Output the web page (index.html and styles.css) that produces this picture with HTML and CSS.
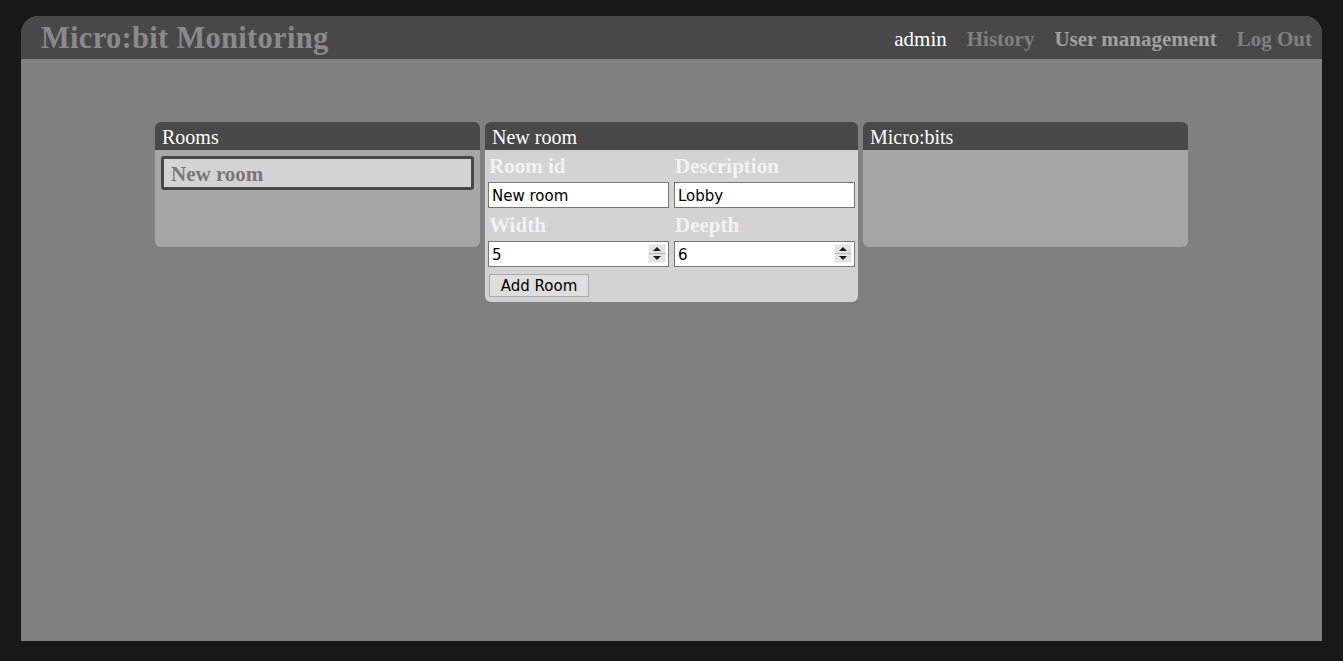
FILE: index.html
```html
<!DOCTYPE html>
<html>
<head>
<meta charset="utf-8">
<link rel="stylesheet" href="styles.css">
</head>
<body>
<div class="app">
  <header class="topbar">
    <h1 class="brand">Micro:bit Monitoring</h1>
    <nav class="nav">
      <span class="nav-user">admin</span>
      <a class="nav-link">History</a>
      <a class="nav-link nav-strong">User management</a>
      <a class="nav-link">Log Out</a>
    </nav>
  </header>
  <main class="main">
    <div class="panels">
      <section class="panel panel-side">
        <div class="panel-head">Rooms</div>
        <div class="panel-body">
          <div class="room-item">New room</div>
        </div>
      </section>
      <section class="panel panel-form">
        <div class="panel-head">New room</div>
        <div class="panel-body form-body">
          <div class="form-grid">
            <div class="field">
              <label class="label">Room id</label>
              <input class="input" type="text" value="New room">
            </div>
            <div class="field">
              <label class="label">Description</label>
              <input class="input" type="text" value="Lobby">
            </div>
            <div class="field">
              <label class="label">Width</label>
              <div class="num-wrap">
                <input class="input" type="text" value="5">
                <span class="spin"><svg width="18" height="19" viewBox="0 0 18 19"><rect x="0" y="0" width="18" height="19" fill="#e3e3e3"/><rect x="0.5" y="0.5" width="17" height="18" fill="none" stroke="#f2f2f2"/><line x1="1" y1="9.5" x2="17" y2="9.5" stroke="#b5b5b5" stroke-width="1"/><path d="M5 7 L9 3 L13 7 Z" fill="#1a1a1a"/><path d="M5 12 L9 16 L13 12 Z" fill="#1a1a1a"/></svg></span>
              </div>
            </div>
            <div class="field">
              <label class="label">Deepth</label>
              <div class="num-wrap">
                <input class="input" type="text" value="6">
                <span class="spin"><svg width="18" height="19" viewBox="0 0 18 19"><rect x="0" y="0" width="18" height="19" fill="#e3e3e3"/><rect x="0.5" y="0.5" width="17" height="18" fill="none" stroke="#f2f2f2"/><line x1="1" y1="9.5" x2="17" y2="9.5" stroke="#b5b5b5" stroke-width="1"/><path d="M5 7 L9 3 L13 7 Z" fill="#1a1a1a"/><path d="M5 12 L9 16 L13 12 Z" fill="#1a1a1a"/></svg></span>
              </div>
            </div>
          </div>
          <button class="btn">Add Room</button>
        </div>
      </section>
      <section class="panel panel-side">
        <div class="panel-head">Micro:bits</div>
        <div class="panel-body"></div>
      </section>
    </div>
  </main>
</div>
</body>
</html>
```

FILE: styles.css
```css
html, body {
  margin: 0;
  padding: 0;
  background: #181818;
  height: 100%;
}
body {
  padding: 16px 21px 20px 21px;
  box-sizing: border-box;
  font-family: "Liberation Serif", "DejaVu Serif", serif;
}
.app {
  height: 625px;
  display: flex;
  flex-direction: column;
  background: #808080;
  border-radius: 18px 18px 0 0;
  overflow: hidden;
}
.topbar {
  height: 43px;
  background: #484848;
  display: flex;
  align-items: center;
  justify-content: space-between;
  padding: 0 10px 0 20px;
  flex-shrink: 0;
}
.brand {
  margin: 0;
  font-size: 30.5px;
  font-weight: bold;
  color: #8a8a8a;
  letter-spacing: 0.3px;
  padding-top: 2px;
}
.nav {
  display: flex;
  gap: 20px;
  font-size: 21px;
  font-weight: bold;
  padding-top: 3px;
}
.nav-user {
  color: #ffffff;
  font-weight: normal;
}
.nav-link {
  color: #808080;
  cursor: pointer;
}
.nav-strong {
  color: #a0a0a0;
}
.main {
  flex: 1;
  padding-top: 63px;
}
.panels {
  display: flex;
  justify-content: center;
  align-items: flex-start;
  gap: 5px;
  margin-left: -21px;
  margin-right: -21px;
}
.panel {
  border-radius: 6px;
  overflow: hidden;
}
.panel-side {
  width: 325px;
}
.panel-form {
  width: 373px;
}
.panel-head {
  height: 28px;
  background: #484848;
  color: #ffffff;
  font-size: 20px;
  line-height: 31px;
  padding-left: 7px;
}
.panel-side .panel-body {
  background: #a6a6a6;
  height: 97px;
  padding: 6px;
  box-sizing: border-box;
}
.room-item {
  background: #d3d3d3;
  border: 3px solid #484848;
  border-radius: 3px;
  height: 34px;
  box-sizing: border-box;
  color: #787878;
  font-weight: bold;
  font-size: 21px;
  line-height: 31px;
  padding-left: 7px;
}
.form-body {
  background: #d3d3d3;
  padding: 0 3px 5px 3px;
}
.form-grid {
  display: grid;
  grid-template-columns: 181px 181px;
  column-gap: 5px;
}
.field {
  display: flex;
  flex-direction: column;
}
.label {
  color: #f2f2f2;
  font-weight: bold;
  font-size: 21px;
  height: 32px;
  line-height: 33px;
  padding-left: 1px;
}
.field:nth-child(n+3) .label {
  height: 33px;
  line-height: 35px;
}
.input {
  height: 26px;
  box-sizing: border-box;
  border: 1px solid #767676;
  background: #fff;
  font-family: "DejaVu Sans", Verdana, sans-serif;
  font-size: 15px;
  padding: 2px 3px 0 3px;
  margin: 0;
  width: 100%;
  color: #000;
}
.num-wrap {
  position: relative;
}
.spin {
  position: absolute;
  right: 3px;
  top: 3px;
  width: 18px;
  height: 19px;
  display: block;
}
.spin svg {
  display: block;
}
.btn {
  margin: 7px 0 0 1px;
  width: 100px;
  height: 23px;
  background: #dedede;
  border: 1px solid #aaaaaa;
  font-family: "DejaVu Sans", Verdana, sans-serif;
  font-size: 15px;
  color: #000;
  padding: 1px 0 0 0;
}
```
